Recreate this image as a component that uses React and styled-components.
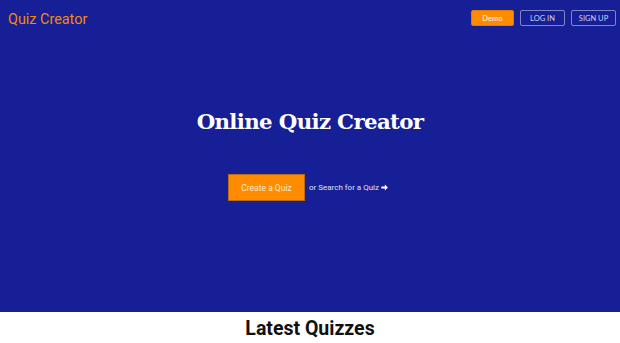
import React from 'react';
import styled, { createGlobalStyle } from 'styled-components';

const GlobalStyle = createGlobalStyle`
  html, body {
    margin: 0;
    padding: 0;
    background: #ffffff;
    font-family: 'Lato', 'Liberation Sans', sans-serif;
  }
`;

const Hero = styled.section`
  background-color: #171f96;
  height: 312px;
  display: flex;
  flex-direction: column;
`;

const NavBar = styled.nav`
  display: flex;
  align-items: center;
  justify-content: space-between;
  padding: 8px 4px 0 8px;
`;

const Logo = styled.a`
  font-family: 'Roboto', sans-serif;
  font-size: 14.4px;
  color: #f48a00;
  text-decoration: none;
  margin-top: 3px;
`;

const NavActions = styled.div`
  display: flex;
  gap: 6px;
`;

const NavButton = styled.button`
  font-family: 'Lato', sans-serif;
  font-size: 7.5px;
  height: 16px;
  width: ${(p) => p.width}px;
  padding: 0;
  border-radius: 2px;
  cursor: pointer;
  text-transform: ${(p) => (p.primary ? 'none' : 'uppercase')};
  color: ${(p) => (p.primary ? '#ffe9c9' : '#d0d4f2')};
  background: ${(p) => (p.primary ? '#ff8c00' : 'transparent')};
  border: 1px solid ${(p) => (p.primary ? '#e07a00' : 'rgba(255,255,255,0.45)')};
  font-weight: ${(p) => (p.primary ? 700 : 400)};
`;

const HeroBody = styled.div`
  flex: 1;
  display: flex;
  flex-direction: column;
  align-items: center;
  padding-top: 81px;
`;

const Title = styled.h1`
  margin: 0;
  font-family: 'DejaVu Serif', 'Liberation Serif', serif;
  font-weight: 700;
  font-size: 21.3px;
  color: #ffffff;
  letter-spacing: -0.65px;
`;

const CallToAction = styled.div`
  display: flex;
  align-items: center;
  gap: 4px;
  margin-top: 40px;
  padding-right: 4px;
`;

const CreateButton = styled.button`
  width: 77px;
  height: 27px;
  background: #ff8c00;
  border: 1px solid #b76a10;
  color: #ffe9c9;
  font-family: 'Roboto', sans-serif;
  font-size: 8.5px;
  padding: 0;
  cursor: pointer;
`;

const SearchLink = styled.a`
  font-family: 'Roboto', sans-serif;
  font-size: 8px;
  color: #dfe2f7;
  display: flex;
  align-items: center;
  gap: 2px;
  text-decoration: none;
`;

const Latest = styled.section`
  background: #ffffff;
  display: flex;
  justify-content: center;
`;

const LatestTitle = styled.h2`
  margin: 5px 0 0;
  font-family: 'Roboto', sans-serif;
  font-weight: 700;
  font-size: 19.5px;
  color: #111111;
`;

function Arrow() {
  return (
    <svg width="7" height="7" viewBox="0 0 10 10">
      <path d="M0.5 3.6h5V0.8L9.8 5 5.5 9.2V6.4h-5z" fill="#ffffff" />
    </svg>
  );
}

export default function App() {
  return (
    <>
      <GlobalStyle />
      <Hero>
        <NavBar>
          <Logo href="#">Quiz Creator</Logo>
          <NavActions>
            <NavButton primary width={43}>Demo</NavButton>
            <NavButton width={45}>Log In</NavButton>
            <NavButton width={45}>Sign Up</NavButton>
          </NavActions>
        </NavBar>
        <HeroBody>
          <Title>Online Quiz Creator</Title>
          <CallToAction>
            <CreateButton>Create a Quiz</CreateButton>
            <SearchLink href="#">
              or Search for a Quiz
              <Arrow />
            </SearchLink>
          </CallToAction>
        </HeroBody>
      </Hero>
      <Latest>
        <LatestTitle>Latest Quizzes</LatestTitle>
      </Latest>
    </>
  );
}
